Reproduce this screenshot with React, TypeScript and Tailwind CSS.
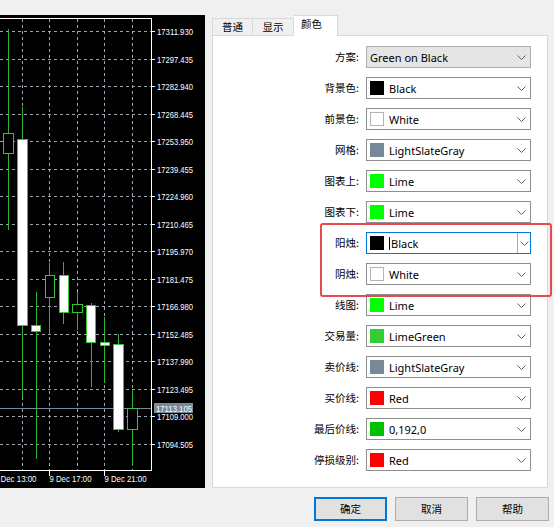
import React from "react";

const prices = [
  "17311.930","17297.435","17282.940","17268.445","17253.950","17239.455","17224.960","17210.465",
  "17195.970","17181.475","17166.980","17152.485","17137.990","17123.495","17109.000","17094.505",
];

type Candle = { x: number; wt: number; wb: number; x1: number; x2: number; bt: number; bb: number; bull: boolean };
const candles: Candle[] = [
  { x: 8, wt: 29, wb: 230, x1: 3, x2: 13, bt: 133, bb: 153, bull: true },
  { x: 22, wt: 107, wb: 397, x1: 17, x2: 27, bt: 139, bb: 325, bull: false },
  { x: 36, wt: 292, wb: 459, x1: 31, x2: 40, bt: 325, bb: 331, bull: false },
  { x: 49, wt: 263, wb: 335, x1: 45, x2: 54, bt: 275, bb: 297, bull: true },
  { x: 63, wt: 262, wb: 324, x1: 59, x2: 68, bt: 275, bb: 312, bull: false },
  { x: 77, wt: 292, wb: 330, x1: 72, x2: 82, bt: 304, bb: 312, bull: true },
  { x: 91, wt: 303, wb: 387, x1: 86, x2: 95, bt: 305, bb: 342, bull: false },
  { x: 104, wt: 317, wb: 383, x1: 100, x2: 109, bt: 342, bb: 345, bull: false },
  { x: 118, wt: 334, wb: 432, x1: 113, x2: 123, bt: 344, bb: 429, bull: false },
  { x: 132, wt: 390, wb: 466, x1: 127, x2: 137, bt: 408, bb: 429, bull: true },
];

function Chart() {
  const font = "'Liberation Sans', Arial, sans-serif";
  return (
    <svg width={205} height={473} viewBox="0 15 205 473" className="block">
      <rect x={0} y={15} width={205} height={473} fill="#000" />
      {prices.map((_, i) => {
        const y = Math.round(31 + 27.5 * i) + 0.5;
        return <line key={"h" + i} x1={0} x2={151} y1={y} y2={y} stroke="#9aa5b2" strokeDasharray="3 3" />;
      })}
      {[22.5, 49.5, 77.5, 104.5, 132.5].map((x) => (
        <line key={"v" + x} x1={x} x2={x} y1={19} y2={470} stroke="#9aa5b2" strokeDasharray="3 3" />
      ))}
      <line x1={0} x2={151} y1={408.5} y2={408.5} stroke="#778899" />
      {candles.map((c, i) => (
        <g key={"c" + i}>
          <line x1={c.x + 0.5} x2={c.x + 0.5} y1={c.wt} y2={c.wb} stroke="#2fb52f" />
          <rect
            x={c.x1 + 0.5}
            y={c.bt + 0.5}
            width={c.x2 - c.x1}
            height={Math.max(c.bb - c.bt, 1)}
            fill={c.bull ? "#000" : "#fff"}
            stroke="#35c435"
          />
        </g>
      ))}
      <line x1={0} x2={151.5} y1={18.5} y2={18.5} stroke="#fff" />
      <line x1={151.5} x2={151.5} y1={18} y2={471} stroke="#fff" />
      <line x1={0} x2={151.5} y1={470.5} y2={470.5} stroke="#fff" />
      {prices.map((p, i) => {
        const y = Math.round(31 + 27.5 * i);
        return (
          <g key={"p" + i}>
            <line x1={151} x2={155} y1={y + 0.5} y2={y + 0.5} stroke="#fff" />
            <text x={157} y={y + 3.5} fontSize={8.5} fill="#fff" fontFamily={font} textLength={36} lengthAdjust="spacingAndGlyphs">
              {p}
            </text>
          </g>
        );
      })}
      <rect x={154} y={403} width={39} height={10} fill="#778899" />
      <text x={156} y={411.5} fontSize={8.5} fill="#fff" fontFamily={font} textLength={36} lengthAdjust="spacingAndGlyphs">
        17113.105
      </text>
      {[49.5, 104.5].map((x) => (
        <line key={"t" + x} x1={x} x2={x} y1={470} y2={476} stroke="#fff" />
      ))}
      <text x={0.5} y={481.5} fontSize={8.5} fill="#fff" fontFamily={font} textLength={36} lengthAdjust="spacingAndGlyphs">
        Dec 13:00
      </text>
      {[
        [49, "9 Dec 17:00"],
        [104, "9 Dec 21:00"],
      ].map(([x, t]) => (
        <text key={t as string} x={(x as number) + 0.5} y={481.5} fontSize={8.5} fill="#fff" fontFamily={font} textLength={42} lengthAdjust="spacingAndGlyphs">
          {t}
        </text>
      ))}
    </svg>
  );
}

type Row = { label: string; color: string | null; text: string; scheme?: boolean; focused?: boolean };
const rows: Row[] = [
  { label: "方案:", color: null, text: "Green on Black", scheme: true },
  { label: "背景色:", color: "#000000", text: "Black" },
  { label: "前景色:", color: "#ffffff", text: "White" },
  { label: "网格:", color: "#778899", text: "LightSlateGray" },
  { label: "图表上:", color: "#00ff00", text: "Lime" },
  { label: "图表下:", color: "#00ff00", text: "Lime" },
  { label: "阳烛:", color: "#000000", text: "Black", focused: true },
  { label: "阴烛:", color: "#ffffff", text: "White" },
  { label: "线图:", color: "#00ff00", text: "Lime" },
  { label: "交易量:", color: "#32cd32", text: "LimeGreen" },
  { label: "卖价线:", color: "#778899", text: "LightSlateGray" },
  { label: "买价线:", color: "#ff0000", text: "Red" },
  { label: "最后价线:", color: "#00c000", text: "0,192,0" },
  { label: "停损级别:", color: "#ff0000", text: "Red" },
];

function Chevron() {
  return (
    <svg width={9} height={5} viewBox="0 0 9 5" className="block">
      <polyline points="0.5,0.5 4.5,4.5 8.5,0.5" fill="none" stroke="#606060" strokeWidth={1} />
    </svg>
  );
}

function Select({ row }: { row: Row }) {
  const base = "w-[165px] h-[22px] flex items-center border";
  const cls = row.scheme
    ? "bg-[#e5e5e5] border-[#adadad]"
    : row.focused
    ? "bg-white border-[#0078d7]"
    : "bg-white border-[#8f8f8f]";
  return (
    <div className={base + " " + cls}>
      {row.color !== null ? (
        <div
          className={
            "ml-[3px] w-[14px] h-[14px] shrink-0 border " +
            (row.color === "#ffffff" ? "border-[#b4b4b4]" : "border-transparent")
          }
          style={{ backgroundColor: row.color }}
        />
      ) : null}
      <div className={"flex-1 flex items-center " + (row.color === null ? "ml-[3px]" : "ml-[5px]")}>
        {row.focused ? <div className="w-px h-[13px] bg-black mr-px" /> : null}
        <span className="text-[11px] leading-none text-black">{row.text}</span>
      </div>
      {row.focused ? (
        <div className="w-[13px] h-full flex items-center justify-center border-l border-[#7eb4ea]">
          <Chevron />
        </div>
      ) : (
        <div className="pr-[4px]">
          <Chevron />
        </div>
      )}
    </div>
  );
}

export default function App() {
  const ui = "'Noto Sans', 'Noto Sans CJK SC', sans-serif";
  const cjk = { fontFamily: "'Noto Sans CJK SC', sans-serif" };
  return (
    <div className="w-[554px] h-[527px] bg-[#f0f0f0] relative overflow-hidden flex flex-col" style={{ fontFamily: ui }}>
      <div className="flex pt-[15px] h-[488px]">
        <div className="w-[205px] h-[473px] bg-black shrink-0">
          <Chart />
        </div>
        <div className="ml-[7px] w-[336px] flex flex-col">
          <div className="h-[20px] flex items-end">
            <div className="w-[41px] h-[17px] border border-b-0 border-[#d9d9d9] bg-[#f0f0f0] flex items-center justify-center text-[10.5px] leading-none text-black" style={cjk}>
              普通
            </div>
            <div className="w-[41px] h-[17px] border border-b-0 border-l-0 border-[#d9d9d9] bg-[#f0f0f0] flex items-center justify-center text-[10.5px] leading-none text-black" style={cjk}>
              显示
            </div>
            <div className="w-[44px] h-[21px] -mb-px relative z-10 border border-b-0 border-l-0 border-[#d9d9d9] bg-white flex items-start pt-[3px] pl-[7px] text-[10.5px] leading-none text-black" style={cjk}>
              颜色
            </div>
          </div>
          <div className="h-[453px] border border-[#d9d9d9] bg-white flex flex-col gap-[9px] pt-[10px]">
            {rows.map((r, i) => (
              <div key={i} className="flex items-center h-[22px]">
                <div className="w-[146px] text-right text-[10.5px] leading-none text-black" style={cjk}>
                  {r.label}
                </div>
                <div className="ml-[7px]">
                  <Select row={r} />
                </div>
              </div>
            ))}
          </div>
        </div>
      </div>
      <div className="flex justify-end gap-[8px] pr-[5px] pt-[9px]" style={cjk}>
        <div className="w-[73px] h-[24px] bg-[#e1e1e1] border border-[#0078d7] shadow-[inset_0_0_0_1px_#0078d7] flex items-center justify-center text-[10.5px] text-black">
          确定
        </div>
        <div className="w-[73px] h-[24px] bg-[#e1e1e1] border border-[#adadad] flex items-center justify-center text-[10.5px] text-black">
          取消
        </div>
        <div className="w-[73px] h-[24px] bg-[#e1e1e1] border border-[#adadad] flex items-center justify-center text-[10.5px] text-black">
          帮助
        </div>
      </div>
      <div className="absolute left-[320px] top-[223px] w-[232px] h-[74px] border-2 border-[#e34b4f] rounded-[3px] pointer-events-none" />
    </div>
  );
}
